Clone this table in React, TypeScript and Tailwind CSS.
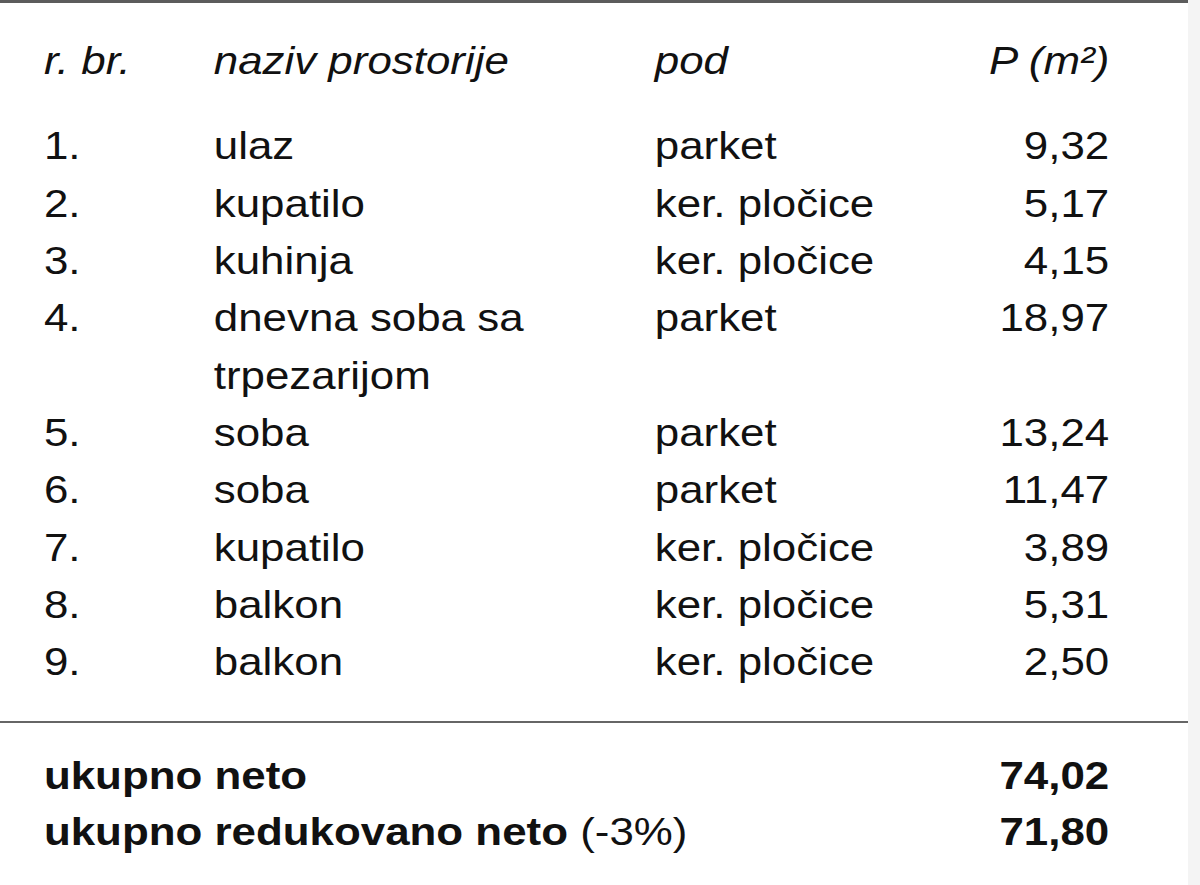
import { type ReactElement } from "react";

type Room = {
  no: string;
  name: string[];
  floor: string;
  area: string;
};

const rooms: Room[] = [
  { no: "1.", name: ["ulaz"], floor: "parket", area: "9,32" },
  { no: "2.", name: ["kupatilo"], floor: "ker. pločice", area: "5,17" },
  { no: "3.", name: ["kuhinja"], floor: "ker. pločice", area: "4,15" },
  { no: "4.", name: ["dnevna soba sa", "trpezarijom"], floor: "parket", area: "18,97" },
  { no: "5.", name: ["soba"], floor: "parket", area: "13,24" },
  { no: "6.", name: ["soba"], floor: "parket", area: "11,47" },
  { no: "7.", name: ["kupatilo"], floor: "ker. pločice", area: "3,89" },
  { no: "8.", name: ["balkon"], floor: "ker. pločice", area: "5,31" },
  { no: "9.", name: ["balkon"], floor: "ker. pločice", area: "2,50" },
];

const RoomRow = ({ room }: { room: Room }): ReactElement => (
  <div className="grid grid-cols-[151px_392px_1fr_auto]">
    <div>{room.no}</div>
    <div>
      {room.name.map((line) => (
        <div key={line}>{line}</div>
      ))}
    </div>
    <div>{room.floor}</div>
    <div className="text-right">{room.area}</div>
  </div>
);

export default function App(): ReactElement {
  return (
    <div className="flex h-[885px] w-full bg-[#f4f4f4] font-['Liberation_Sans',Arial,sans-serif] text-[#111]">
      <div className="w-[1188px] shrink-0 border-t-[3px] border-[#5c5c5c] bg-white">
        <div className="w-[1056px] origin-left scale-x-[1.125] text-[39px] leading-[57.33px]">
          <div className="pl-[39px] pr-[70px] pt-[29px]">
            <div className="grid grid-cols-[151px_392px_1fr_auto] italic">
              <div>r. br.</div>
              <div>naziv prostorije</div>
              <div>pod</div>
              <div className="text-right">P (m²)</div>
            </div>

            <div className="mt-[28px]">
              {rooms.map((room) => (
                <RoomRow key={room.no} room={room} />
              ))}
            </div>
          </div>

          <div className="mt-[30px] h-[2px] bg-[#666]" />

          <div className="pl-[39px] pr-[70px] pt-[25px] leading-[56px]">
            <div className="flex justify-between font-bold">
              <span>ukupno neto</span>
              <span>74,02</span>
            </div>
            <div className="flex justify-between">
              <span>
                <span className="font-bold">ukupno redukovano neto</span> (-3%)
              </span>
              <span className="font-bold">71,80</span>
            </div>
          </div>
        </div>
      </div>
      <div className="flex-1" />
    </div>
  );
}
